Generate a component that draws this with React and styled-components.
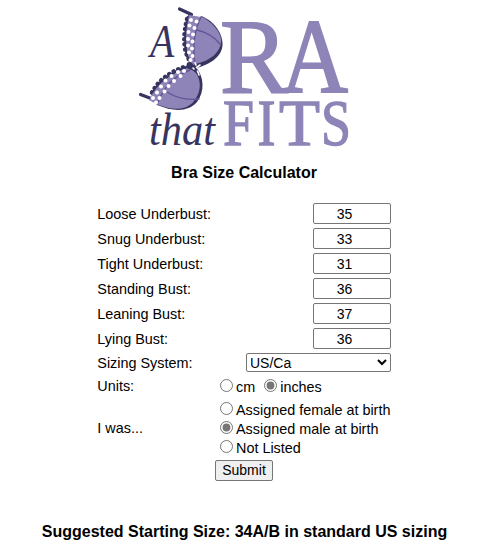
import React from "react";
import styled, { createGlobalStyle } from "styled-components";

const GlobalStyle = createGlobalStyle`
  body { margin: 0; background: #fff; color: #000; font-family: "Liberation Sans", Arial, sans-serif; }
`;

const Page = styled.main`
  display: flex;
  flex-direction: column;
  align-items: center;
  width: 482px;
  height: 555px;
  padding-left: 6px;
  padding-top: 5px;
  box-sizing: border-box;
  overflow: hidden;
`;

const LogoSvg = styled.svg`
  display: block;
  width: 214px;
  height: 145px;
  flex: none;
  margin-left: 2px;
  overflow: visible;
`;

const SerifText = styled.text`
  font-family: "Liberation Serif", "Times New Roman", serif;
  font-size: ${(p) => p.$size}px;
  fill: #8e84b7;
  stroke: #8e84b7;
  stroke-width: ${(p) => p.$weight}px;
`;

const ScriptText = styled.text`
  font-family: "Liberation Serif", "Times New Roman", serif;
  font-style: italic;
  font-size: ${(p) => p.$size}px;
  fill: #37355f;
`;

const Title = styled.h1`
  margin: 13px 0 19px;
  font-size: 16px;
  line-height: 19px;
  font-weight: 700;
`;

const Form = styled.form`
  display: flex;
  flex-direction: column;
  width: 294px;
  font-size: 14.4px;
`;

const Row = styled.div`
  display: flex;
  justify-content: space-between;
  align-items: center;
  height: ${(p) => p.$height}px;
`;

const Label = styled.span`
  padding-left: 0.3px;
  padding-top: ${(p) => p.$drop || 0}px;
  white-space: nowrap;
`;

const NumberInput = styled.input`
  box-sizing: border-box;
  width: 78px;
  height: 21px;
  padding: 1px 17px 1px 2px;
  border: 1px solid #767676;
  border-radius: 2px;
  background: #fff;
  color: #000;
  font: 14px "Liberation Sans", Arial, sans-serif;
  text-align: center;
`;

const Select = styled.select`
  box-sizing: border-box;
  width: 145px;
  height: 19px;
  padding: 0 0 2px;
  border: 1px solid #767676;
  border-radius: 2px;
  background: #fff;
  color: #000;
  font: 14px "Liberation Sans", Arial, sans-serif;
  text-indent: -1px;
`;

const Choices = styled.div`
  display: flex;
  flex-direction: ${(p) => (p.$stacked ? "column" : "row")};
  gap: ${(p) => (p.$stacked ? 0 : 9)}px;
  width: 171px;
  padding-top: ${(p) => (p.$stacked ? 1 : 3)}px;
`;

const Choice = styled.label`
  display: flex;
  align-items: center;
  height: 19px;
  white-space: nowrap;
`;

const Radio = styled.input`
  width: 13px;
  height: 13px;
  margin: 0 3px 3px 0;
  accent-color: #767676;
`;

const Submit = styled.button`
  align-self: center;
  box-sizing: border-box;
  width: 58px;
  height: 21px;
  margin-top: 2px;
  padding: 0 0 1px;
  border: 1px solid #767676;
  border-radius: 2px;
  background: #efefef;
  color: #000;
  font: 14px "Liberation Sans", Arial, sans-serif;
`;

const Result = styled.h2`
  margin: 41px 0 0;
  padding-left: 1px;
  font-size: 16px;
  line-height: 19px;
  font-weight: 700;
  white-space: nowrap;
`;

const measurements = [
  ["Loose Underbust:", "35"],
  ["Snug Underbust:", "33"],
  ["Tight Underbust:", "31"],
  ["Standing Bust:", "36"],
  ["Leaning Bust:", "37"],
  ["Lying Bust:", "36"],
];

const laceDots = [
  [191, 20], [196.5, 21.5], [189.5, 25.5], [194.5, 28], [188.5, 32], [193, 34.5],
  [188, 39], [192.5, 41.5], [188, 45.5], [192, 48.5], [189, 52.5], [192.5, 56],
  [190.5, 60],
  [184, 71], [178, 72], [180.5, 76], [171.5, 76], [174, 81], [165.5, 80.5],
  [168.5, 86], [161, 86.5], [164.5, 91.5], [157, 92.5], [159.5, 98], [153, 98],
  [156, 102.5],
];

function Logo() {
  return (
    <LogoSvg viewBox="138 5 214 145" role="img" aria-label="A Bra That Fits">
      <g strokeLinecap="round" strokeLinejoin="round">
        <path d="M179.5 9 L191.5 14.5 L187 19" fill="none" stroke="#37355f" strokeWidth="3.2" />
        <path d="M187 19 Q182 39 186 53 L190 62" fill="none" stroke="#37355f" strokeWidth="4.5" strokeDasharray="0.1 5" />
        <path d="M187.5 18 Q183.5 39 187 56 L191 63" fill="none" stroke="#37355f" strokeWidth="2.5" />
        <path d="M201 16 C213 20 223 33 222.5 45 C222 57 209 65 196 68 L193 63 Z" fill="#37355f" />
        <path d="M189 15 L201 17 Q191 37 196 65 L191 64 Q184 44 187 26 Z" fill="#8e84b7" />
        <path d="M201 16.5 C213 22 222.5 34 221 43 C219 55 206 62 195 64 Q190 38 201 16.5 Z" fill="#8e84b7" />
        <path d="M201 17 Q191 37 195 64 M197 30 Q211 33 220 44" fill="none" stroke="#67539a" strokeWidth="1.4" />

        <path d="M140.5 94.5 L151 98.5" fill="none" stroke="#37355f" strokeWidth="3.2" />
        <path d="M152 92.5 Q161 75 184 67" fill="none" stroke="#37355f" strokeWidth="4.5" strokeDasharray="0.1 5" />
        <path d="M152 93.5 Q162 76 187 67" fill="none" stroke="#37355f" strokeWidth="2.5" />
        <path d="M196 67 C204 77 205 91 197 102 C188 112 174 112 157 105 L190 71 Z" fill="#37355f" />
        <path d="M149 100 Q160 77 188 68 L192 70 Q167 80 158 105 Z" fill="#8e84b7" />
        <path d="M192 69 C202 77 202 91 194 101 C186 111 173 110.5 157 104.5 Q166 79 192 69 Z" fill="#8e84b7" />
        <path d="M157 104.5 Q166 79 190 70 M167 92 Q181 101 199 99" fill="none" stroke="#67539a" strokeWidth="1.4" />
        {laceDots.map(([cx, cy]) => (
          <circle key={`${cx}-${cy}`} cx={cx} cy={cy} r="2" fill="#fff" />
        ))}
        <path d="M187 63 Q190 60 194 65 Q203 62 200 66 L196 69 L199 75 L192 70 L186 68 Z" fill="#37355f" />
        <path d="M195 62.5 L196 65 M200 65 L196.5 67.5 M197.5 71 L199 75 M193 68 L194 69" fill="none" stroke="#fff" strokeWidth="1.6" />
      </g>
      <ScriptText $size={46} transform="translate(150 57) scale(.86 1)">A</ScriptText>
      <ScriptText $size={46} x="149" y="144.5" textLength="66" lengthAdjust="spacingAndGlyphs">that</ScriptText>
      <SerifText $size={105} $weight={1.8} y="91.5">
        <tspan x="220" textLength="68" lengthAdjust="spacingAndGlyphs">R</tspan>
        <tspan x="281" textLength="67" lengthAdjust="spacingAndGlyphs">A</tspan>
      </SerifText>
      <SerifText $size={66} $weight={1.3} y="144.5">
        <tspan x="223" textLength="31" lengthAdjust="spacingAndGlyphs">F</tspan>
        <tspan x="257.5" textLength="18" lengthAdjust="spacingAndGlyphs">I</tspan>
        <tspan x="279" textLength="41" lengthAdjust="spacingAndGlyphs">T</tspan>
        <tspan x="321" textLength="30" lengthAdjust="spacingAndGlyphs">S</tspan>
      </SerifText>
    </LogoSvg>
  );
}

export default function App() {
  return (
    <Page>
      <GlobalStyle />
      <Logo />
      <Title>Bra Size Calculator</Title>
      <Form onSubmit={(e) => e.preventDefault()}>
        {measurements.map(([label, value]) => (
          <Row key={label} $height={25}>
            <Label>{label}</Label>
            <NumberInput aria-label={label} defaultValue={value} />
          </Row>
        ))}
        <Row $height={22}>
          <Label $drop={2}>Sizing System:</Label>
          <Select defaultValue="US/Ca">
            <option>US/Ca</option>
          </Select>
        </Row>
        <Row $height={25}>
          <Label>Units:</Label>
          <Choices>
            <Choice><Radio type="radio" name="units" />cm</Choice>
            <Choice><Radio type="radio" name="units" defaultChecked />inches</Choice>
          </Choices>
        </Row>
        <Row $height={60}>
          <Label>I was...</Label>
          <Choices $stacked>
            <Choice><Radio type="radio" name="assigned" />Assigned female at birth</Choice>
            <Choice><Radio type="radio" name="assigned" defaultChecked />Assigned male at birth</Choice>
            <Choice><Radio type="radio" name="assigned" />Not Listed</Choice>
          </Choices>
        </Row>
        <Submit>Submit</Submit>
      </Form>
      <Result>Suggested Starting Size: 34A/B in standard US sizing</Result>
    </Page>
  );
}
